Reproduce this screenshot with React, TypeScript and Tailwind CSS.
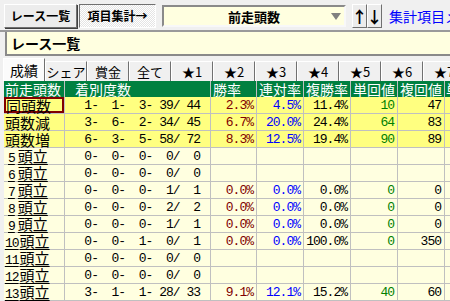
import React from 'react';

type Row = {
    label: string;
    num?: string;
    hl?: boolean;
    focus?: boolean;
    d: number[];
    r?: string[];
};

const rows: Row[] = [
    { label: '同頭数', hl: true, focus: true, d: [1, 1, 3, 39, 44], r: ['2.3%', '4.5%', '11.4%', '10', '47'] },
    { label: '頭数減', hl: true, d: [3, 6, 2, 34, 45], r: ['6.7%', '20.0%', '24.4%', '64', '83'] },
    { label: '頭数増', hl: true, d: [6, 3, 5, 58, 72], r: ['8.3%', '12.5%', '19.4%', '90', '89'] },
    { label: '頭立', num: '5', d: [0, 0, 0, 0, 0] },
    { label: '頭立', num: '6', d: [0, 0, 0, 0, 0] },
    { label: '頭立', num: '7', d: [0, 0, 0, 1, 1], r: ['0.0%', '0.0%', '0.0%', '0', '0'] },
    { label: '頭立', num: '8', d: [0, 0, 0, 2, 2], r: ['0.0%', '0.0%', '0.0%', '0', '0'] },
    { label: '頭立', num: '9', d: [0, 0, 0, 1, 1], r: ['0.0%', '0.0%', '0.0%', '0', '0'] },
    { label: '頭立', num: '10', d: [0, 0, 1, 0, 1], r: ['0.0%', '0.0%', '100.0%', '0', '350'] },
    { label: '頭立', num: '11', d: [0, 0, 0, 0, 0] },
    { label: '頭立', num: '12', d: [0, 0, 0, 0, 0] },
    { label: '頭立', num: '13', d: [3, 1, 1, 28, 33], r: ['9.1%', '12.1%', '15.2%', '40', '60'] },
];

const tabs = ['シェア', '賞金', '全て', '★1', '★2', '★3', '★4', '★5', '★6', '★7'];
const heads = ['勝率', '連対率', '複勝率', '単回値', '複回値'];
const valColors = ['text-[#800000]', 'text-[#0000ff]', 'text-black', 'text-[#008000]', 'text-black'];

const pad = (n: number) => String(n).padStart(3, ' ');
const fmt = (d: number[]) => `${pad(d[0])}-${pad(d[1])}-${pad(d[2])}-${pad(d[3])}/${pad(d[4])}`;

const jp = "font-['Noto_Sans_CJK_JP',sans-serif]";
const mono = "font-['Liberation_Mono',monospace] text-[13px] tracking-[-1px]";

// raised win-classic button edges
const raised = 'border border-t-white border-l-white border-r-[#707070] border-b-[#707070] bg-[#ececec]';
const headCell = 'h-[16px] flex items-center bg-[#008040] text-white text-[14px] leading-[16px] whitespace-nowrap';

export default function App() {
    return (
        <div className={`w-[450px] h-[301px] overflow-hidden bg-[#f0f0f0] ${jp} text-black leading-none`}>
            {/* top bar */}
            <div className="h-[30px] flex items-start pt-[4px] pl-[4px] whitespace-nowrap">
                <div className={`shrink-0 w-[73px] h-[24px] flex items-center justify-center text-[12px] font-bold shadow-[1px_1px_0_#404040] ${raised}`}>
                    レース一覧
                </div>
                <div className="shrink-0 ml-[2px] w-[77px] h-[24px] flex items-center justify-center text-[12px] font-bold border border-t-[#707070] border-l-[#707070] border-r-white border-b-white bg-[image:repeating-conic-gradient(#ffffff_0_25%,#e4e4e4_0_50%)] bg-[length:2px_2px]">
                    項目集計→
                </div>
                <div className="shrink-0 relative ml-[6px] mt-[1px] w-[184px] h-[22px] flex items-center justify-center bg-[#ffffe0] border-2 border-t-[#8a8a8a] border-l-[#8a8a8a] border-r-[#f8f8f8] border-b-[#f8f8f8] text-[13px] font-bold">
                    前走頭数
                    <div className="absolute right-[3px] top-[6px] w-0 h-0 border-l-[5px] border-r-[5px] border-t-[7px] border-l-transparent border-r-transparent border-t-[#808080]" />
                </div>
                <div className={`shrink-0 ml-[6px] w-[15px] h-[24px] flex items-center justify-center text-[16px] font-bold ${raised}`}>
                    ↑
                </div>
                <div className={`shrink-0 w-[15px] h-[24px] flex items-center justify-center text-[16px] font-bold ${raised}`}>
                    ↓
                </div>
                <div className="ml-[7px] mt-[5px] text-[14px] text-[#0000ff]">集計項目メニュー</div>
            </div>

            {/* title field */}
            <div className="h-[2px] bg-[#9a9a9a]" />
            <div className="pl-[5px]">
                <div className="h-[24px] flex items-center pl-[4px] bg-[#ffffe0] border-l-2 border-b-2 border-[#8a8a8a] text-[14px] font-bold">
                    レース一覧
                </div>
            </div>

            {/* tabs */}
            <div className="mt-[2px] h-[23px] flex items-end pl-[3px] whitespace-nowrap">
                <div className="shrink-0 w-[42px] h-[23px] flex items-center justify-center text-[14px] bg-[#fbfbfb] border-t border-l border-white border-r border-r-[#707070]">
                    成績
                </div>
                {tabs.map((t) => (
                    <div
                        key={t}
                        className="shrink-0 w-[42px] h-[20px] flex items-center justify-center text-[13px] bg-[#f0f0f0] border-t border-l border-white border-r border-r-[#707070]"
                    >
                        {t}
                    </div>
                ))}
            </div>

            {/* grid */}
            <div className="ml-[4px] grid grid-cols-[61px_146px_46px_47px_47px_47px_47px_60px] w-[501px]">
                <div className={`${headCell} pl-[1px] border-r border-[#c0c0c0]`}>前走頭数</div>
                <div className={`${headCell} pl-[10px] border-r border-[#c0c0c0]`}>着別度数</div>
                {heads.map((h) => (
                    <div key={h} className={`${headCell} pl-[2px] border-r border-[#c0c0c0]`}>
                        {h}
                    </div>
                ))}
                <div className={`${headCell} pl-[1px]`}>単勝</div>

                {rows.map((row, i) => {
                    const bg = row.hl ? 'bg-[#ffff80]' : 'bg-[#ffffe0]';
                    const cell = `h-[17px] border-r border-b border-[#c0c0c0] ${bg}`;
                    return (
                        <React.Fragment key={i}>
                            <div className={`${cell} flex items-center whitespace-nowrap text-[15px] ${row.focus ? 'shadow-[inset_0_0_0_2px_#800000] pl-[2px]' : 'pl-[1px]'}`}>
                                {row.num ? (
                                    <span className="underline underline-offset-[2px] decoration-1">
                                        <span className={`${mono} ${row.num.length === 1 ? 'pl-[3px] pr-[3px]' : 'pr-[1px]'}`}>{row.num}</span>
                                        {row.label}
                                    </span>
                                ) : (
                                    row.label
                                )}
                            </div>
                            <div className={`${cell} flex items-center justify-end pr-[10px] whitespace-pre ${mono}`}>
                                {fmt(row.d)}
                            </div>
                            {[0, 1, 2, 3, 4].map((c) => (
                                <div key={c} className={`${cell} flex items-center justify-end pr-[3px] whitespace-pre ${mono} ${valColors[c]}`}>
                                    {row.r ? row.r[c] : ''}
                                </div>
                            ))}
                            <div className={cell} />
                        </React.Fragment>
                    );
                })}
            </div>
        </div>
    );
}
